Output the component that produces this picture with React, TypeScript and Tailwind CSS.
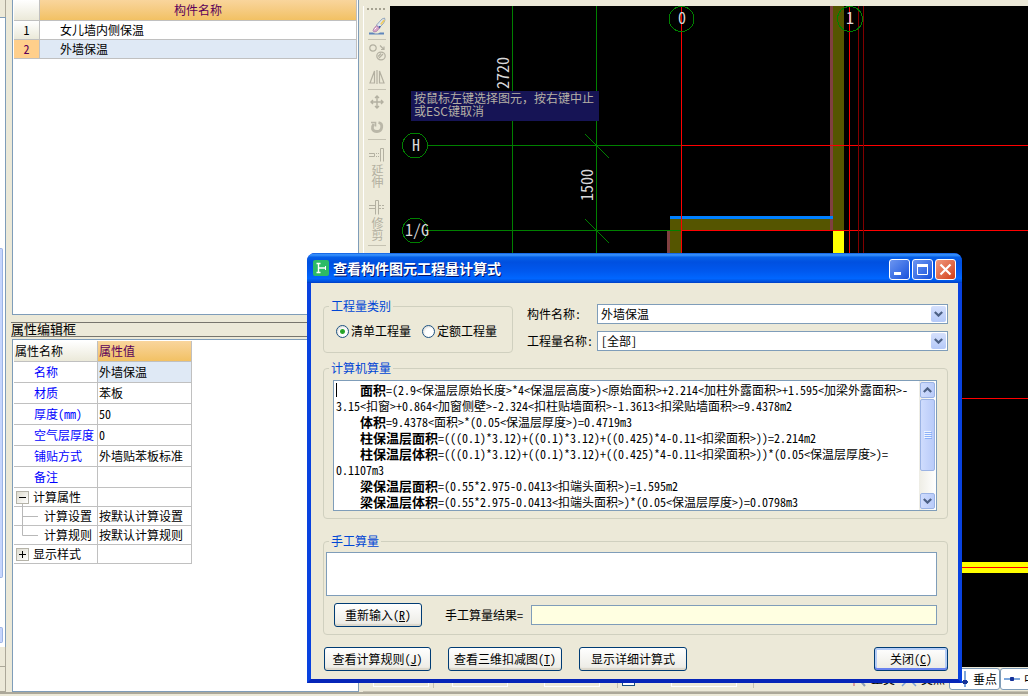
import type { ReactNode } from 'react'

interface PropertyRow {
  name: string
  value: string
  kind?: 'open' | 'closed' | 'child' | 'lastChild'
}

const components = ['女儿墙内侧保温', '外墙保温']

const properties: PropertyRow[] = [
  { name: '名称', value: '外墙保温' },
  { name: '材质', value: '苯板' },
  { name: '厚度(mm)', value: '50' },
  { name: '空气层厚度', value: '0' },
  { name: '铺贴方式', value: '外墙贴苯板标准' },
  { name: '备注', value: '' },
  { name: '计算属性', value: '', kind: 'open' },
  { name: '计算设置', value: '按默认计算设置', kind: 'child' },
  { name: '计算规则', value: '按默认计算规则', kind: 'lastChild' },
  { name: '显示样式', value: '', kind: 'closed' },
]

const formulaLines = [
  { title: '面积', text: '=(2.9<保温层原始长度>*4<保温层高度>)<原始面积>+2.214<加柱外露面积>+1.595<加梁外露面积>-' },
  { title: '', text: '3.15<扣窗>+0.864<加窗侧壁>-2.324<扣柱贴墙面积>-1.3613<扣梁贴墙面积>=9.4378m2' },
  { title: '体积', text: '=9.4378<面积>*(0.05<保温层厚度>)=0.4719m3' },
  { title: '柱保温层面积', text: '=(((0.1)*3.12)+((0.1)*3.12)+((0.425)*4-0.11<扣梁面积>))=2.214m2' },
  { title: '柱保温层体积', text: '=(((0.1)*3.12)+((0.1)*3.12)+((0.425)*4-0.11<扣梁面积>))*(0.05<保温层厚度>)=' },
  { title: '', text: '0.1107m3' },
  { title: '梁保温层面积', text: '=(0.55*2.975-0.0413<扣端头面积>)=1.595m2' },
  { title: '梁保温层体积', text: '=(0.55*2.975-0.0413<扣端头面积>)*(0.05<保温层厚度>)=0.0798m3' },
]

function Chevron({ up = false }: { up?: boolean }) {
  return (
    <svg width="9" height="6" viewBox="0 0 9 6" fill="none" stroke="#4d6185" strokeWidth="2.2">
      <path d={up ? 'M0.8 5 4.5 1.4 8.2 5' : 'M0.8 1 4.5 4.6 8.2 1'} />
    </svg>
  )
}

function ComponentList() {
  return (
    <section className="h-[315px] shrink-0 border-x border-b border-[#7f9db9] bg-white px-px">
      <table className="w-full table-fixed border-separate border-spacing-0">
        <thead>
          <tr className="h-[21px]">
            <th className="w-[26px] border-r border-b border-[#c0c0c0] bg-linear-to-b from-white to-[#ebe9d9]" />
            <th className="border-r border-b border-[#c0c0c0] bg-linear-to-b from-[#f9d59c] to-[#f2c163] leading-[14px] font-normal text-[#5a005a]">
              构件名称
            </th>
          </tr>
        </thead>
        <tbody>
          {components.map((name, i) => (
            <tr key={name} className="h-[19px] leading-[14px]">
              <td
                className={`border-r border-b border-[#c0c0c0] text-center ${
                  i === 1 ? 'bg-[#ffcf8b] text-[#5a005a]' : 'bg-linear-to-b from-white to-[#ebe9d9]'
                }`}
              >
                {i + 1}
              </td>
              <td className={`border-r border-b border-[#c0c0c0] pl-5 ${i === 1 ? 'bg-[#dfe9f5]' : 'bg-white'}`}>
                {name}
              </td>
            </tr>
          ))}
        </tbody>
      </table>
    </section>
  )
}

function PropertyName({ row }: { row: PropertyRow }) {
  if (row.kind === 'open' || row.kind === 'closed') {
    return (
      <div className="flex items-center gap-1 pl-0.5">
        <button
          aria-label={row.name}
          className="flex size-[13px] items-center justify-center border border-[#b5b3a8] bg-linear-to-br from-[#dedccf] to-white"
        >
          <svg width="7" height="7" stroke="#000" strokeWidth="1" shapeRendering="crispEdges">
            <path d={row.kind === 'open' ? 'M0 3.5H7' : 'M0 3.5H7M3.5 0V7'} />
          </svg>
        </button>
        {row.name}
      </div>
    )
  }
  if (row.kind) {
    return (
      <div className="flex h-[18px] items-center">
        <svg width="30" height="18" className="shrink-0 overflow-visible" fill="none" stroke="#b8b8b8">
          <path d={row.kind === 'child' ? 'M8.5 -3V19M8.5 9.5H24' : 'M8.5 -1V9.5H24'} />
        </svg>
        {row.name}
      </div>
    )
  }
  return <div className="pl-5 text-[#0000ff]">{row.name}</div>
}

function PropertyEditor() {
  return (
    <section className="flex min-h-0 flex-1 flex-col">
      <h2 className="mt-[7px] -ml-px h-[15px] border-y border-[#77756d] text-[13px] leading-[12px]">属性编辑框</h2>
      <div className="mt-0.5 min-h-0 flex-1 border border-[#7f9db9] bg-white p-px">
        <table className="table-fixed border-separate border-spacing-0 leading-[14px]">
          <thead>
            <tr className="h-[21px] text-left">
              <th className="w-[84px] border-r border-b border-[#c0c0c0] bg-linear-to-b from-white to-[#ebe9d9] pl-px font-normal">
                属性名称
              </th>
              <th className="w-[94px] border-r border-b border-[#c0c0c0] bg-linear-to-b from-[#f9d59c] to-[#f2c163] pl-px font-normal text-[#5a005a]">
                属性值
              </th>
            </tr>
          </thead>
          <tbody>
            {properties.map((row, i) => (
              <tr key={row.name} className={row.kind ? 'h-[19px]' : 'h-[21px]'}>
                <td className="border-r border-b border-[#c0c0c0] whitespace-nowrap">
                  <PropertyName row={row} />
                </td>
                <td
                  className={`border-r border-b border-[#c0c0c0] pl-px whitespace-nowrap ${i === 0 ? 'bg-[#dfe9f5]' : ''}`}
                >
                  {row.value}
                </td>
              </tr>
            ))}
          </tbody>
        </table>
      </div>
    </section>
  )
}

function ToolButton({ label, className, children }: { label: string; className: string; children: ReactNode }) {
  return (
    <button
      aria-label={label}
      className={`flex w-full shrink-0 flex-col items-center justify-center text-[#b3b0a1] ${className}`}
    >
      {children}
    </button>
  )
}

function Separator() {
  return <div className="mx-1 h-px shrink-0 self-stretch bg-[#c5c2b2]" />
}

function EditToolbar() {
  return (
    <div className="flex w-[27px] shrink-0 flex-col items-center border-l border-white bg-[#ece9d8]">
      <svg width="20" height="6" className="shrink-0" fill="#a5a292">
        <path d="M0 2h2v2H0zM4 2h2v2H4zM8 2h2v2H8zM12 2h2v2h-2zM16 2h2v2h-2z" />
      </svg>
      <ToolButton label="刷新" className="h-[27px]">
        <svg width="18" height="18" viewBox="0 0 18 18" fill="none">
          <path d="M1 15.500h4l2 1h3l2-1h4v2H1z" fill="#5f86bb" />
          <path d="M8.500 8 14 2l2.500-1 .5 2-1.500 3.500L11 11z" fill="#dfe7f0" stroke="#8298b4" strokeWidth=".8" />
          <path d="m12 7 3.500-4.500 1.500 1-3.500 4.500z" fill="#f0cd62" />
          <path d="m11 9 2 .5-1.500 2-1.500-.5z" fill="#2b4f9c" />
          <path d="m6 11.500 2.500-3 3 2.500-3 3.500-2.500.5-1-1.500z" fill="#d9a3c8" stroke="#a57fa8" strokeWidth=".8" />
          <path d="m6.500 12.500 2-2" stroke="#fff" />
        </svg>
      </ToolButton>
      <Separator />
      <ToolButton label="复制" className="h-[25px]">
        <svg width="17" height="17" viewBox="0 0 17 17" fill="none" stroke="currentColor" strokeWidth="1.2">
          <circle cx="4" cy="4" r="3.2" />
          <ellipse cx="12" cy="12" rx="4.2" ry="3.800" />
          <path d="m10 14 4-4M9 12.500l3-3M11 1.500l4 4M15 2.500v3h-3" />
        </svg>
      </ToolButton>
      <ToolButton label="镜像" className="h-[24px]">
        <svg width="16" height="14" viewBox="0 0 16 14" fill="none" stroke="currentColor" strokeWidth="1.200">
          <path d="M5.500 1v12H1zM8 0v14M10.500 1v12H15z" />
        </svg>
      </ToolButton>
      <Separator />
      <ToolButton label="移动" className="h-[24px]">
        <svg width="14" height="14" viewBox="0 0 14 14" fill="none" stroke="currentColor" strokeWidth="1.400">
          <path d="M7 1v12M1 7h12M5 3l2-2 2 2M5 11l2 2 2-2M3 5 1 7l2 2M11 5l2 2-2 2" />
        </svg>
      </ToolButton>
      <ToolButton label="旋转" className="h-[25px]">
        <svg width="14" height="14" viewBox="0 0 14 14" fill="none" stroke="#bab7a8" strokeWidth="2.800">
          <path d="M8.500 2.500c5 1 4 9-1.500 9S1.500 7 3.800 4" />
          <path d="M1 2.500h4.500v4" strokeWidth="1.600" />
        </svg>
      </ToolButton>
      <Separator />
      <ToolButton label="延伸" className="h-[55px] leading-[14px]">
        <svg width="16" height="14" viewBox="0 0 16 14" fill="none" stroke="currentColor" className="mb-0.5">
          <path d="M0 5.500h5.500v3H0M11.500 13.500V.5h3v13" />
          <path d="M7 5.500h4M7 8.500h4" strokeDasharray="1 1" />
        </svg>
        <span className="[writing-mode:vertical-rl]">延伸</span>
      </ToolButton>
      <ToolButton label="修剪" className="h-[50px] leading-[14px]">
        <svg width="16" height="15" viewBox="0 0 16 15" fill="none" stroke="currentColor" className="mb-0.5">
          <path d="M0 5.500h6.500M0 8.500h6.500M6.500 14.500V.5h3v14" />
          <path d="M10 5.500h6M10 8.500h6" strokeDasharray="2 1" />
        </svg>
        <span className="[writing-mode:vertical-rl]">修剪</span>
      </ToolButton>
      <Separator />
    </div>
  )
}

function FloorPlan() {
  return (
    <div className="relative min-h-0 flex-1 overflow-hidden bg-black">
      <svg className="block h-full w-full" shapeRendering="crispEdges" fill="none">
        {/* walls and insulation */}
        <rect x="440" y="0" width="3" height="225" fill="#804040" />
        <rect x="443" y="0" width="11" height="225" fill="#555500" />
        <rect x="280" y="213" width="160" height="12" fill="#555500" />
        <rect x="280" y="213" width="11" height="120" fill="#555500" />
        <rect x="277" y="225" width="3" height="120" fill="#804040" />
        <rect x="280" y="210" width="163" height="3" fill="#0080ff" />
        <rect x="443" y="225" width="11" height="336" fill="#ffff00" />
        <rect x="443" y="556" width="100%" height="11" fill="#ffff00" />
        {/* axis grid */}
        <path d="M122.500 0V500M206.500 0V500M38 139.500H291M38 224.500H291M195 128l24 24M195 213l24 24" stroke="#008000" />
        <g stroke="#ff0000">
          <path d="M291.500 0V700M459.500 0V500" />
          <path d="M291 139.500H4000M291 224.500H4000M291 392.500H4000M291 561.500H4000" />
        </g>
        <path d="M468.500 0V500M473.500 0V500" stroke="#800000" />
        <g stroke="#008000">
          <circle cx="25" cy="139.500" r="12.500" />
          <circle cx="25" cy="224.500" r="12.500" />
          <circle cx="291.500" cy="13" r="12.500" />
          <circle cx="460" cy="13" r="12.500" />
        </g>
        <g fill="#d8d8d8" fontSize="16" textAnchor="middle">
          <text x="26" y="145">H</text>
          <text x="27" y="230">1/G</text>
          <text x="292" y="18">0</text>
          <text x="460" y="18">1</text>
          <text transform="translate(119 67) rotate(-90)">2720</text>
          <text transform="translate(203 179) rotate(-90)">1500</text>
        </g>
      </svg>
      <div
        role="tooltip"
        className="absolute top-[85px] left-[21px] h-[30px] w-[188px] bg-[#161455] px-[3px] leading-[13px] text-[#b5b0a5] [font-feature-settings:normal]"
      >
        按鼠标左键选择图元，按右键中止或ESC键取消
      </div>
    </div>
  )
}

function AxisInput({ label, className }: { label: string; className: string }) {
  return <input aria-label={label} className={`h-[15px] shrink-0 border border-white bg-[#ece9d8] ${className}`} />
}

function BarDivider() {
  return <span className="h-[18px] w-px shrink-0 bg-[#c5c2b2]" />
}

function SnapBar() {
  return (
    <div className="flex h-[25px] shrink-0 items-center overflow-hidden border-b border-[#c5c2b2] bg-[#ece9d8] pl-[10px]">
      <div className="flex h-full min-w-0 flex-1 items-center overflow-hidden">
        <AxisInput label="X" className="w-[56px]" />
        <div className="ml-1 flex items-center gap-[18px]">
          <BarDivider />
          <AxisInput label="Y" className="w-[56px]" />
        </div>
        <div className="ml-9 flex items-center gap-[17px]">
          <AxisInput label="Z" className="w-[56px]" />
          <BarDivider />
        </div>
        <input
          type="checkbox"
          aria-label="旋转"
          className="ml-1 size-[13px] shrink-0 appearance-none border border-[#1c5180] bg-white"
        />
        <div className="ml-9 flex items-center gap-4">
          <AxisInput label="角度" className="w-[66px]" />
          <BarDivider />
        </div>
      </div>
      <div className="flex h-full shrink-0 items-center">
        <button className="flex items-center gap-1 pr-1.5">
          <svg width="16" height="16" viewBox="0 0 16 16" fill="none" strokeWidth="2">
            <path d="M3 1v14" stroke="#dba0a0" />
            <path d="m7 7 7 8" stroke="#8f9fb5" />
          </svg>
          正交
        </button>
        <button className="flex items-center gap-1">
          <svg width="16" height="16" viewBox="0 0 16 16" stroke="#7da2d6" strokeWidth="1.500">
            <path d="m1 15 14-14M1 1l14 14" />
          </svg>
          交点
        </button>
        <button className="ml-1 flex h-[22px] items-center gap-1 rounded-[3px] border border-[#7f9db9] bg-white pr-0.5 pl-[3px]">
          <svg width="16" height="16" viewBox="0 0 16 16" fill="none" strokeWidth="2">
            <path d="M12 0v16" stroke="#7da7dc" />
            <path d="M0 11h15" stroke="#1c4f94" />
            <path d="M10 9h4v4h-4z" fill="#14309a" />
          </svg>
          垂点
        </button>
        <button className="-mr-6 flex h-[22px] items-center gap-1 rounded-[3px] border border-[#7f9db9] bg-white pr-[3px] pl-[3px]">
          <svg width="16" height="16" viewBox="0 0 16 16" fill="none" strokeWidth="2">
            <path d="M0 8h16" stroke="#7da7dc" />
            <path d="M6.500 6.500h3v3h-3z" fill="#14309a" stroke="#14309a" strokeWidth="1" />
          </svg>
          中点
        </button>
      </div>
    </div>
  )
}

function GroupBox({ title, className, children }: { title: string; className: string; children: ReactNode }) {
  return (
    <fieldset className={`rounded border border-[#d0d0bf] ${className}`}>
      <legend className="ml-[5px] h-[14px] px-0.5 leading-[13px] text-[#0046d5]">{title}</legend>
      {children}
    </fieldset>
  )
}

function Combo({ id, label, value }: { id: string; label: string; value: string }) {
  return (
    <div className="flex h-[20px] items-center">
      <label htmlFor={id} className="w-[70px] shrink-0">
        {label}:
      </label>
      <div className="relative flex-1">
        <select
          id={id}
          className="block h-[20px] w-full appearance-none border border-[#7f9db9] bg-white pl-[3px] leading-[16px]"
        >
          <option>{value}</option>
        </select>
        <span className="pointer-events-none absolute top-0.5 right-0.5 flex h-4 w-[15px] items-center justify-center rounded-xs bg-linear-to-b from-[#d5e0fc] to-[#b5c9f8]">
          <Chevron />
        </span>
      </div>
    </div>
  )
}

function PushButton({
  text,
  accessKey,
  className,
  isDefault = false,
}: {
  text: string
  accessKey?: string
  className: string
  isDefault?: boolean
}) {
  return (
    <button
      className={`h-6 shrink-0 rounded-[3px] border border-[#003c74] bg-linear-to-b from-white to-[#ebeae3] leading-[20px] ${
        isDefault ? 'shadow-[inset_0_-2px_0_#6982ee,inset_0_0_0_2px_#b5cdf7]' : 'shadow-[inset_0_-2px_1px_#dcd8cb]'
      } ${className}`}
    >
      {text}
      {accessKey && (
        <>
          (<u>{accessKey}</u>)
        </>
      )}
    </button>
  )
}

function TitleButton({ label, className, children }: { label: string; className: string; children: ReactNode }) {
  return (
    <button
      aria-label={label}
      className={`flex size-[21px] items-center justify-center rounded-[3px] border border-white ${className}`}
    >
      <svg width="19" height="19" viewBox="0 0 19 19" fill="none" stroke="#fff">
        {children}
      </svg>
    </button>
  )
}

function ScrollBar() {
  const part =
    'flex shrink-0 items-center justify-center rounded-xs border border-[#9bb3e4] bg-linear-to-r from-[#cfdcfd] to-[#b9cbf9]'
  return (
    <div className="flex w-[17px] shrink-0 flex-col bg-linear-to-r from-[#eeede5] to-white p-px">
      <button aria-label="向上滚动" className={`h-4 ${part}`}>
        <Chevron up />
      </button>
      <div className={`mt-px h-[72px] ${part}`}>
        <svg width="8" height="8" stroke="#eef4fe">
          <path d="M0 .5h7M0 2.500h7M0 4.500h7M0 6.500h7" />
          <path d="M1 1.500h7M1 3.500h7M1 5.500h7M1 7.500h7" stroke="#8cb0f8" />
        </svg>
      </div>
      <button aria-label="向下滚动" className={`mt-auto h-4 ${part}`}>
        <Chevron />
      </button>
    </div>
  )
}

function FormulaDialog() {
  return (
    <div
      role="dialog"
      aria-labelledby="dialog-title"
      className="absolute top-[253px] left-[307px] w-[655px] overflow-hidden rounded-t-lg bg-[#0831d9]"
    >
      <header className="flex h-[30px] items-center bg-[linear-gradient(to_bottom,#0a5be0_0%,#3c96ff_6%,#0560e8_14%,#0050e0_30%,#0058ee_60%,#0066ff_85%,#0050dc_95%,#003dc4_100%)] pr-1.5 pl-1.5">
        <svg width="16" height="16" viewBox="0 0 16 16" className="rounded-xs bg-[#2dbb66]" fill="none" stroke="#fff">
          <path d="M3.500 3.500h4M3.500 12.500h4M5.500 3.500v9M5.500 8H12" strokeWidth="1.400" />
          <path d="M12.500 6v4" />
        </svg>
        <h1
          id="dialog-title"
          className="ml-1 flex-1 text-[14px] leading-[18px] font-bold text-white [text-shadow:1px_1px_0_#00136b]"
        >
          查看构件图元工程量计算式
        </h1>
        <div className="mt-[3px] flex gap-0.5">
          <TitleButton label="最小化" className="bg-linear-to-br from-[#6c95f0] to-[#1650dc]">
            <path d="M4 13.500h7" strokeWidth="3" />
          </TitleButton>
          <TitleButton label="最大化" className="bg-linear-to-br from-[#6c95f0] to-[#1650dc]">
            <path d="M4.500 5v9.500h10V5" />
            <path d="M4 5.500h11" strokeWidth="3" />
          </TitleButton>
          <TitleButton label="关闭" className="bg-linear-to-br from-[#f0987c] to-[#d13a0c]">
            <path d="m4.500 4.500 10 10M14.500 4.500l-10 10" strokeWidth="2.200" />
          </TitleButton>
        </div>
      </header>

      <div className="border-x-4 border-b-4 border-[#0842e0] border-b-[#0625b8]">
        <form className="bg-[#ece9d8] pt-4 pr-[10px] pb-2 pl-3 leading-[16px]">
          <div className="flex items-start gap-[14px]">
            <GroupBox title="工程量类别" className="w-[190px] shrink-0">
              <div className="flex gap-[11px] pt-[10px] pb-[13px] pl-3">
                {['清单工程量', '定额工程量'].map((name, i) => (
                  <label key={name} className="flex items-center gap-0.5 whitespace-nowrap">
                    <input
                      type="radio"
                      name="quantity"
                      defaultChecked={i === 0}
                      className="size-[13px] appearance-none rounded-full border border-[#1c5180] bg-white shadow-[inset_1px_1px_2px_#dcdcd7] checked:bg-[radial-gradient(circle,#21a121_0,#2fa82f_2px,#ffffff_3px)]"
                    />
                    {name}
                  </label>
                ))}
              </div>
            </GroupBox>
            <div className="flex flex-1 flex-col gap-[7px] pt-[5px]">
              <Combo id="component-name" label="构件名称" value="外墙保温" />
              <Combo id="quantity-name" label="工程量名称" value="[全部]" />
            </div>
          </div>

          <GroupBox title="计算机算量" className="mt-2">
            <div className="mt-[5px] mr-[10px] mb-[7px] ml-[9px] flex h-[131px] border border-[#7f9db9] bg-white">
              <div
                role="textbox"
                aria-label="计算机算量"
                aria-multiline="true"
                tabIndex={0}
                className="relative min-w-0 flex-1 overflow-hidden pt-px pl-0.5 whitespace-nowrap"
              >
                <span className="absolute top-0.5 left-0.5 h-[14px] w-px bg-black" />
                {formulaLines.map((line, i) => (
                  <div key={i} className={`h-4 ${line.title ? 'pl-6' : ''}`}>
                    {line.title && <b className="text-[13px]">{line.title}</b>}
                    {line.text}
                  </div>
                ))}
              </div>
              <ScrollBar />
            </div>
          </GroupBox>

          <GroupBox title="手工算量" className="mt-[15px]">
            <div className="pt-1 pr-[10px] pb-[7px] pl-0.5">
              <textarea
                aria-label="手工算量"
                className="block h-[44px] w-full resize-none border border-[#7f9db9] bg-white p-0.5"
              />
              <div className="mt-[7px] flex items-center pl-2">
                <PushButton text="重新输入" accessKey="R" className="w-[88px]" />
                <label htmlFor="manual-result" className="ml-[23px] w-[86px] shrink-0">
                  手工算量结果=
                </label>
                <input
                  id="manual-result"
                  readOnly
                  className="h-5 min-w-0 flex-1 border border-[#7f9db9] bg-[#ffffe1] px-1"
                />
              </div>
            </div>
          </GroupBox>

          <div className="mt-3 flex gap-[17px] pl-px">
            <PushButton text="查看计算规则" accessKey="J" className="w-[107px]" />
            <PushButton text="查看三维扣减图" accessKey="T" className="w-[114px]" />
            <PushButton text="显示详细计算式" className="w-[108px]" />
            <PushButton text="关闭" accessKey="C" className="ml-auto w-[74px]" isDefault />
          </div>
        </form>
      </div>
    </div>
  )
}

export default function App() {
  return (
    <div className="relative flex h-screen flex-col overflow-hidden bg-[#ece9d8] font-['Noto_Sans_CJK_SC',sans-serif] text-[12px] text-black [font-feature-settings:'hwid']">
      <main className="flex min-h-0 flex-1">
        {/* edge of the docked navigator */}
        <div className="flex w-3 shrink-0 flex-col pr-[6px]">
          <div className="h-[17px] border-r border-[#aca899]" />
          <div className="flex flex-1 flex-col border-t border-r border-[#7f9db9] bg-white pt-[230px] pr-0.5 pb-1">
            <div className="h-[330px] rounded-r-xs border-y border-r border-[#9bb3e4] bg-[#c6d5fc]" />
            <div className="mt-auto h-[16px] rounded-r-xs border-y border-r border-[#9bb3e4] bg-[#c6d5fc]" />
          </div>
          <div className="h-5 border-r border-b border-[#aca899]" />
          <div className="h-[25px] border-r border-b border-[#aca899]" />
        </div>
        <div className="flex w-[347px] shrink-0 flex-col">
          <ComponentList />
          <PropertyEditor />
        </div>
        <div className="flex min-w-0 flex-1 flex-col pt-[6px] pl-1">
          <div className="flex min-h-0 flex-1">
            <EditToolbar />
            <FloorPlan />
          </div>
          <SnapBar />
        </div>
      </main>
      <footer className="h-1 shrink-0 border-t-2 border-[#aca899] bg-[#ece9d8]" />
      <FormulaDialog />
    </div>
  )
}
